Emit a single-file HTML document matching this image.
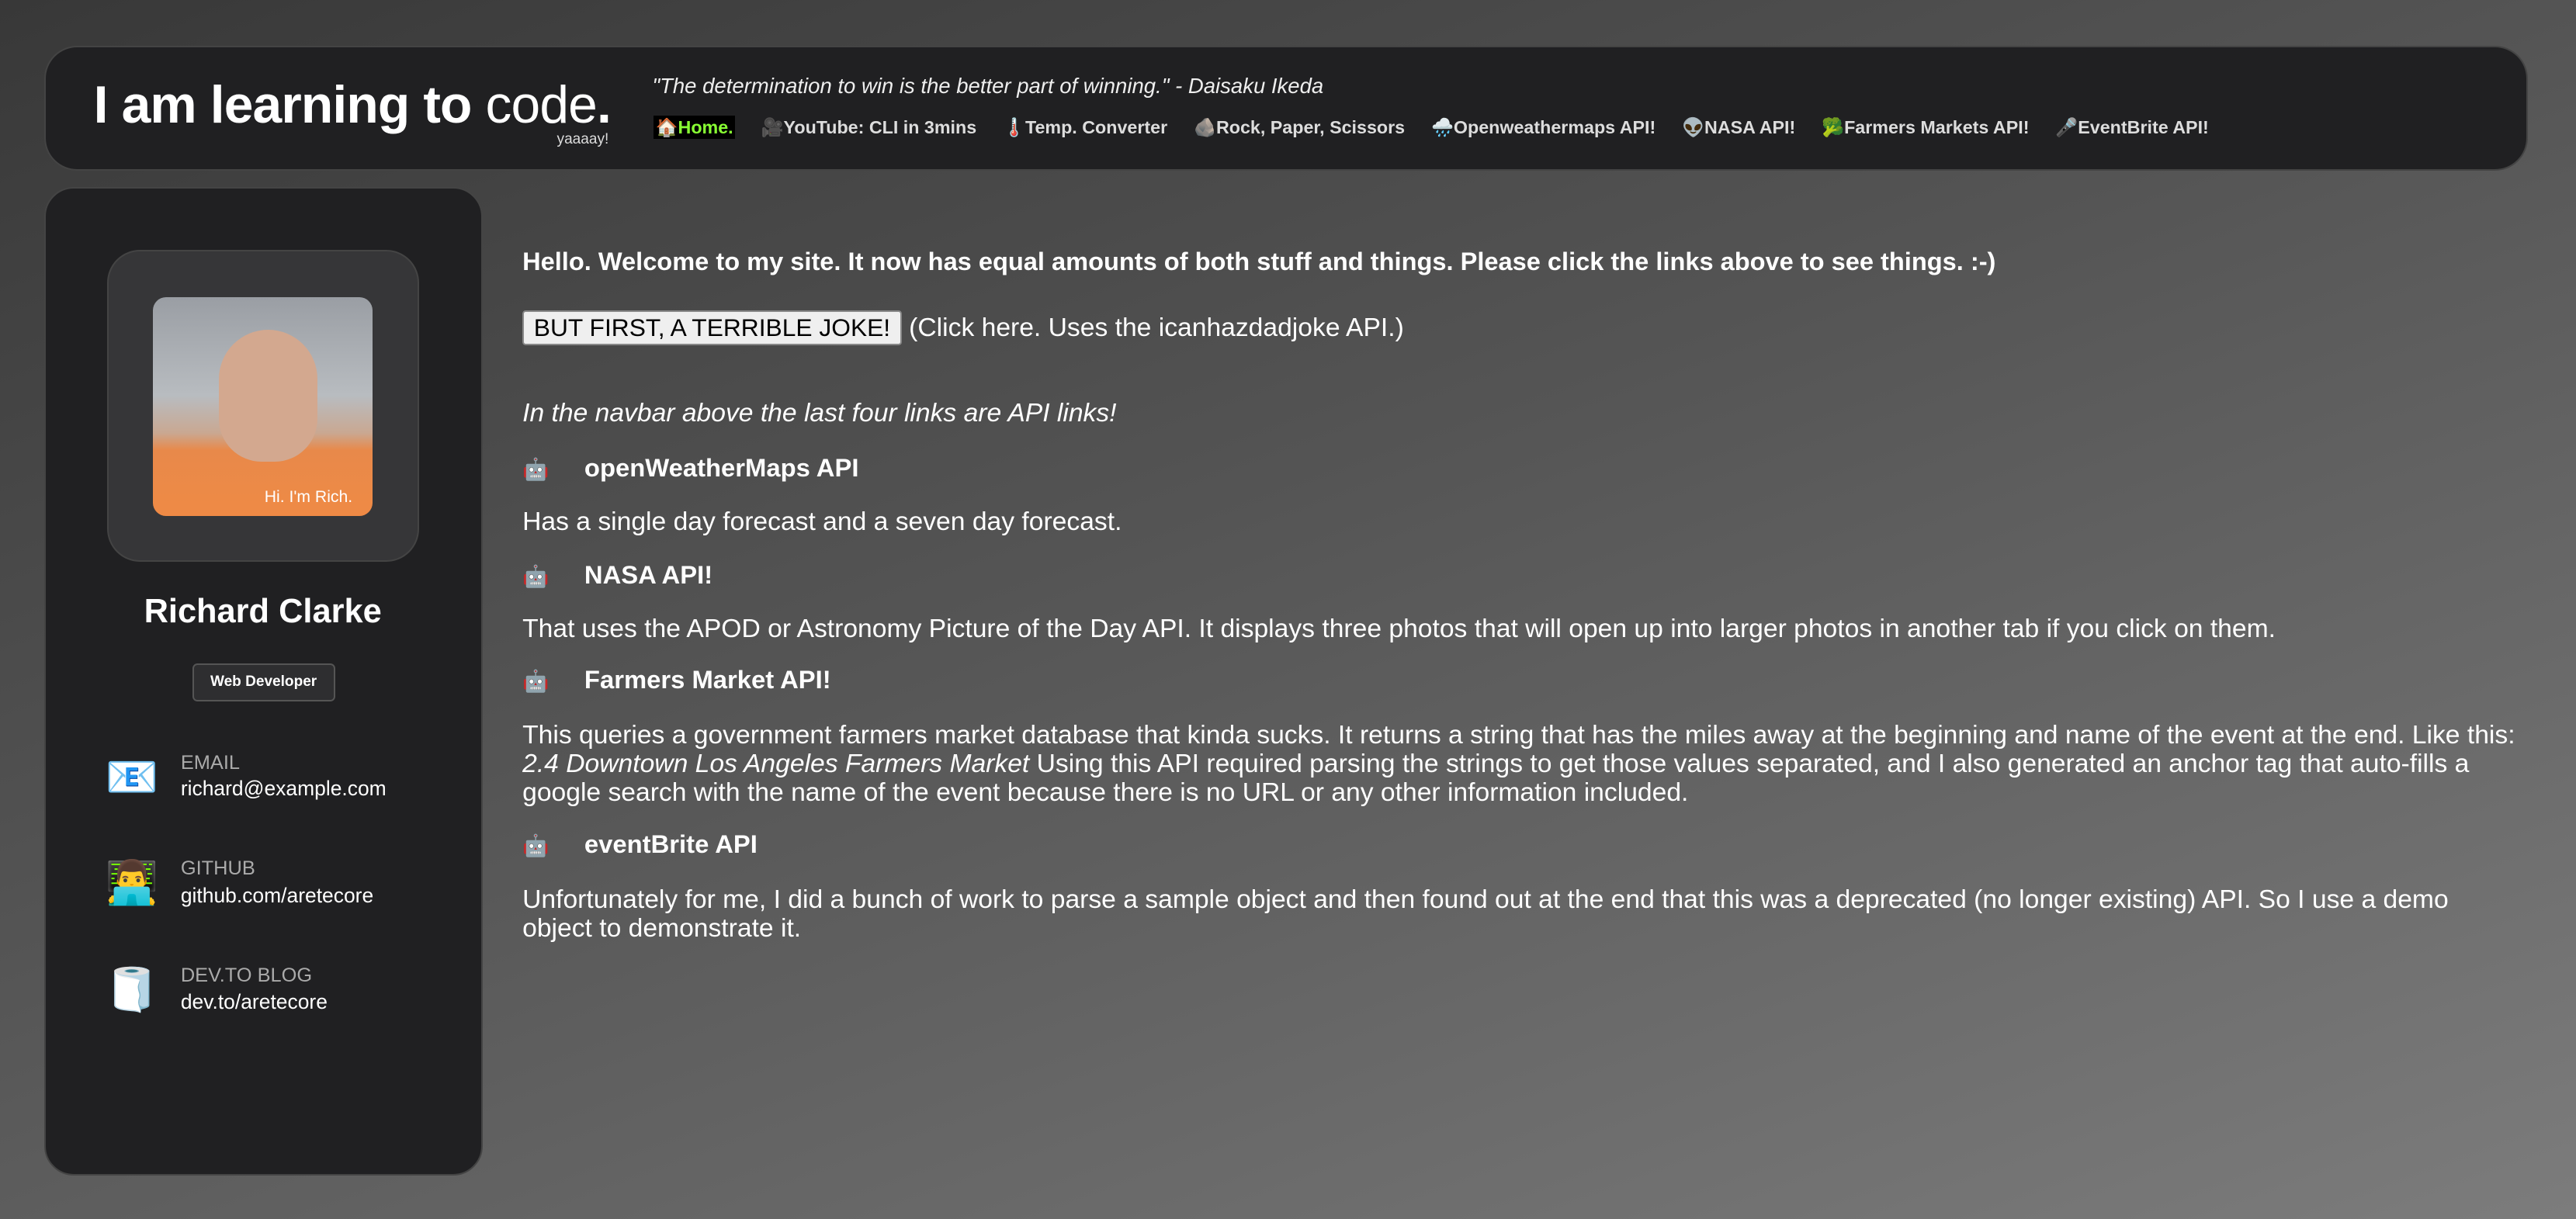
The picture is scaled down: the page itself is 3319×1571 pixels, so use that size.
<!DOCTYPE html>
<html><head><meta charset="utf-8"><style>
html,body{margin:0;padding:0;}
body{width:3319px;height:1571px;overflow:hidden;background:linear-gradient(160deg,#383838 0%,#555 45%,#7c7c7c 100%);font-family:"Liberation Sans",sans-serif;color:#fff;}
#z{zoom:2.1167;width:1568px;height:742px;position:relative;}
.a{position:absolute;}
.hdr{left:27px;top:28px;width:1510px;height:74px;background:#202022;border:1px solid #444;border-radius:20px;}
.side{left:27px;top:114px;width:265px;height:600px;background:#202022;border:1px solid #444;border-radius:18px;}
.nav span{margin-right:16px;}
.nav{font-size:11px;font-weight:bold;color:#ddd;white-space:nowrap;}
.lab{font-size:12px;color:#aaa;}
.val{font-size:12.5px;color:#fff;}
.m{font-size:15.9px;line-height:17.5px;}
.h{font-weight:bold;font-size:15.5px;}
.bot{font-size:13px;}
</style></head><body><div id="z">
<div class="a hdr"></div>
<div class="a" style="left:57px;top:46px;font-size:32px;letter-spacing:-0.4px;white-space:nowrap"><b>I am learning to</b> <span style="font-weight:300">code</span><b>.</b></div>
<div class="a" style="left:339px;top:80px;font-size:9px;color:#ddd">yaaaay!</div>
<div class="a" style="left:397px;top:45px;font-size:13px;font-style:italic;color:#eee;white-space:nowrap">"The determination to win is the better part of winning." - Daisaku Ikeda</div>
<div class="a nav" style="left:398px;top:71px"><span style="background:#000;color:#8f3;padding:1px 1px">🏠Home.</span><span>🎥YouTube: CLI in 3mins</span><span>🌡️Temp. Converter</span><span>🪨Rock, Paper, Scissors</span><span>🌧️Openweathermaps API!</span><span>👽NASA API!</span><span>🥦Farmers Markets API!</span><span>🎤EventBrite API!</span></div>

<div class="a side"></div>
<div class="a" style="left:65px;top:152px;width:190px;height:190px;background:#363638;border:1px solid #444;border-radius:20px;box-sizing:border-box"></div>
<div class="a" style="left:93px;top:181px;width:134px;height:133px;border-radius:8px;overflow:hidden;background:linear-gradient(180deg,#9a9ea4 0%,#b8bcc0 45%,#c9a892 62%,#e8894a 70%,#ef8a45 100%)">
<div class="a" style="left:40px;top:20px;width:60px;height:80px;border-radius:30px 30px 26px 26px;background:#d3a88f"></div>
<div class="a" style="left:68px;top:116px;font-size:10px;color:#fff;white-space:nowrap">Hi. I'm Rich.</div></div>
<div class="a" style="left:27px;top:361px;width:266px;text-align:center;font-size:20.5px;font-weight:bold">Richard Clarke</div>
<div class="a" style="left:117px;top:404px;width:85px;height:21px;background:#2e2e30;border:1px solid #555;border-radius:3px;font-size:9px;font-weight:bold;text-align:center;line-height:21px">Web Developer</div>
<div class="a" style="left:64px;top:458px;font-size:26px">📧</div>
<div class="a lab" style="left:110px;top:458px">EMAIL</div><div class="a val" style="left:110px;top:473px">richard@example.com</div>
<div class="a" style="left:64px;top:522px;font-size:26px">👨‍💻</div>
<div class="a lab" style="left:110px;top:522px">GITHUB</div><div class="a val" style="left:110px;top:538px">github.com/aretecore</div>
<div class="a" style="left:64px;top:587px;font-size:26px">🧻</div>
<div class="a lab" style="left:110px;top:587px">DEV.TO BLOG</div><div class="a val" style="left:110px;top:603px">dev.to/aretecore</div>

<div class="a m" style="left:318px;top:150px;font-weight:bold;font-size:15.4px;white-space:nowrap">Hello. Welcome to my site. It now has equal amounts of both stuff and things. Please click the links above to see things. :-)</div>
<div class="a m" style="left:318px;top:189px;white-space:nowrap"><span style="display:inline-block;background:#efefef;color:#000;border:1px solid #888;border-radius:2px;padding:1px 6px;font-size:15px">BUT FIRST, A TERRIBLE JOKE!</span> (Click here. Uses the icanhazdadjoke API.)</div>
<div class="a m" style="left:318px;top:243px;font-style:italic">In the navbar above the last four links are API links!</div>
<div class="a m h" style="left:318px;top:276px"><span class="bot">🤖</span>&nbsp;&nbsp;&nbsp;&nbsp;&nbsp;openWeatherMaps API</div>
<div class="a m" style="left:318px;top:309px">Has a single day forecast and a seven day forecast.</div>
<div class="a m h" style="left:318px;top:341px"><span class="bot">🤖</span>&nbsp;&nbsp;&nbsp;&nbsp;&nbsp;NASA API!</div>
<div class="a m" style="left:318px;top:374px;white-space:nowrap">That uses the APOD or Astronomy Picture of the Day API. It displays three photos that will open up into larger photos in another tab if you click on them.</div>
<div class="a m h" style="left:318px;top:405px"><span class="bot">🤖</span>&nbsp;&nbsp;&nbsp;&nbsp;&nbsp;Farmers Market API!</div>
<div class="a m" style="left:318px;top:439px;width:1216px">This queries a government farmers market database that kinda sucks. It returns a string that has the miles away at the beginning and name of the event at the end. Like this: <i>2.4 Downtown Los Angeles Farmers Market</i> Using this API required parsing the strings to get those values separated, and I also generated an anchor tag that auto-fills a google search with the name of the event because there is no URL or any other information included.</div>
<div class="a m h" style="left:318px;top:505px"><span class="bot">🤖</span>&nbsp;&nbsp;&nbsp;&nbsp;&nbsp;eventBrite API</div>
<div class="a m" style="left:318px;top:539px;width:1190px">Unfortunately for me, I did a bunch of work to parse a sample object and then found out at the end that this was a deprecated (no longer existing) API. So I use a demo object to demonstrate it.</div>
</div></body></html>
